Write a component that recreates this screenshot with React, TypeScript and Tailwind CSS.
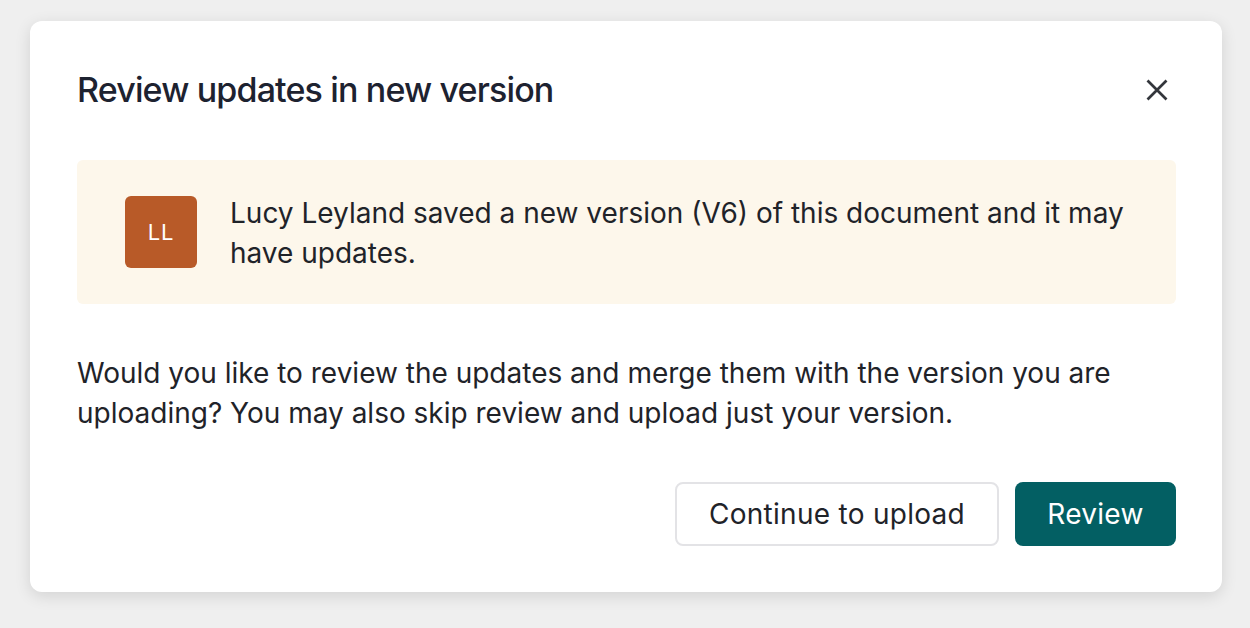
import React from "react";

export default function App() {
  return (
    <div className="w-[1250px] h-[628px] bg-[#efefef] pt-[21px] pl-[30px]" style={{ fontFamily: "Inter, 'Noto Sans', sans-serif" }}>
      <div className="w-[1192px] h-[571px] bg-white rounded-[12px] shadow-[0_4px_16px_rgba(0,0,0,0.12)] pl-[47px] pr-[46px] pt-[49px] text-[#1f2329]">
        <div className="flex items-center justify-between h-[40px]">
          <h1 className="text-[34px] leading-[40px] tracking-[-0.025em] font-medium text-[#1d2230]">Review updates in new version</h1>
          <button className="w-[40px] h-[40px] flex items-center justify-center -mr-[1px]">
            <svg width="24" height="24" viewBox="0 0 24 24" fill="none" stroke="#33363b" strokeWidth="2.7" strokeLinecap="butt">
              <path d="M2.5 2.5L21.5 21.5M21.5 2.5L2.5 21.5" />
            </svg>
          </button>
        </div>
        <div className="mt-[50px] h-[144px] bg-[#fdf7eb] rounded-[6px] pl-[48px] pr-[40px] flex items-start pt-[36px] gap-[33px]">
          <div className="w-[72px] h-[72px] shrink-0 rounded-[6px] bg-[#b85a28] flex items-center justify-center text-white text-[22px] tracking-[0.04em]">LL</div>
          <p className="text-[28px] leading-[40px] -mt-[3px]">Lucy Leyland saved a new version (V6) of this document and it may have updates.</p>
        </div>
        <p className="mt-[49px] text-[28px] leading-[40px]">Would you like to review the updates and merge them with the version you are uploading? You may also skip review and upload just your version.</p>
        <div className="mt-[49px] flex justify-end gap-[16px]">
          <button className="h-[64px] w-[324px] rounded-[8px] border-2 border-[#e3e3e6] bg-white text-[28px] tracking-[0.01em] text-[#1f2329]">Continue to upload</button>
          <button className="h-[64px] w-[161px] rounded-[8px] bg-[#035f63] text-white text-[28px] tracking-[0.01em]">Review</button>
        </div>
      </div>
    </div>
  );
}
